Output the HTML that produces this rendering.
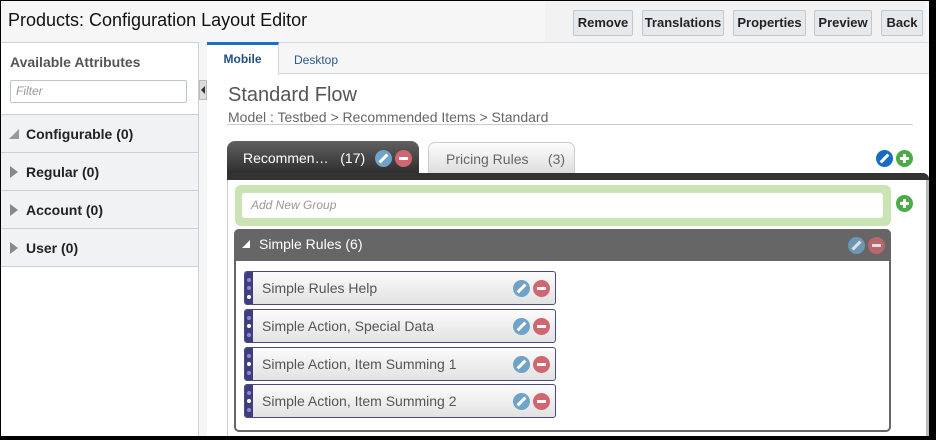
<!DOCTYPE html>
<html><head><meta charset="utf-8"><style>
*{box-sizing:border-box;margin:0;padding:0}
body{width:936px;height:440px;background:#000;font-family:"Liberation Sans",Arial,sans-serif;position:relative;overflow:hidden}
.a{position:absolute}
#page{position:absolute;left:1px;top:1px;width:928px;height:435px;background:#f6f6f6;overflow:hidden}
.btn{position:absolute;top:9px;height:26px;background:#e6e9ec;border:1px solid #bfc8d0;border-radius:2px;font-weight:bold;font-size:13px;color:#222;text-align:center;line-height:24px}
.sec{position:absolute;left:0;width:197px;height:38px;background:#f0f2f4;border-bottom:1px solid #c6d0da;font-weight:bold;font-size:14px;color:#222;line-height:38px;padding-left:25px}
.tri{position:absolute;left:9px;top:13px;width:0;height:0;border-top:6px solid transparent;border-bottom:6px solid transparent;border-left:8px solid #888}
.ic{position:absolute;width:17px;height:17px;border-radius:50%}
.ed{background:#6fa3c7}
.rm{background:#d06670}
.rm::after{content:"";position:absolute;left:4px;top:7px;width:9px;height:3px;background:#fff}
.ed::after{content:"";position:absolute;left:7px;top:3px;width:3px;height:11px;background:#fff;transform:rotate(45deg)}
.gp{background:#4caa48}
.gp::before{content:"";position:absolute;left:4px;top:7px;width:9px;height:3px;background:#fff}
.gp::after{content:"";position:absolute;left:7px;top:4px;width:3px;height:9px;background:#fff}
.item{position:absolute;left:243px;width:312px;height:34px;border:1px solid #4a4a80;border-radius:3px;background:linear-gradient(#fbfbfb,#e2e2e2);font-size:14px;color:#555;line-height:32px;padding-left:17px}
.item .strip{position:absolute;left:0;top:0;width:8px;height:32px;background:#3d3d80;border-radius:2px 0 0 2px}
.item .strip i{position:absolute;left:2px;width:4px;height:4px;border-radius:50%;background:#8a8ad0}
.item .strip i.w{background:#fff}
</style></head><body>
<div id="page">
<div class="a" style="left:7px;top:9px;font-size:18px;color:#111">Products: Configuration Layout Editor</div>
<div class="a" style="left:544px;top:0;width:380px;height:49px;background:#f2f2f2"></div>
<div class="a" style="left:544px;top:43px;width:380px;height:6px;background:#fff"></div>
<div class="btn" style="left:572px;width:60px">Remove</div>
<div class="btn" style="left:641px;width:82px">Translations</div>
<div class="btn" style="left:732px;width:73px">Properties</div>
<div class="btn" style="left:813px;width:58px">Preview</div>
<div class="btn" style="left:880px;width:42px">Back</div>

<div class="a" style="left:0;top:41px;width:198px;height:394px;background:#fff;border-top:1px solid #c8d0d8;border-right:1px solid #c8d0d8"></div>
<div class="a" style="left:9px;top:53px;font-size:14px;font-weight:bold;color:#555">Available Attributes</div>
<div class="a" style="left:9px;top:79px;width:177px;height:23px;border:1px solid #bcc6cf;border-radius:2px;background:#fff;font-size:12px;font-style:italic;color:#999;line-height:21px;padding-left:5px">Filter</div>
<div class="a" style="left:0;top:113px;width:197px;height:1px;background:#c6d0da"></div>
<div class="sec" style="top:114px"><div class="tri" style="border:none;width:0;height:0;border-left:10px solid transparent;border-bottom:10px solid #999;top:14px;left:8px"></div>Configurable (0)</div>
<div class="sec" style="top:152px"><div class="tri"></div>Regular (0)</div>
<div class="sec" style="top:190px"><div class="tri"></div>Account (0)</div>
<div class="sec" style="top:228px"><div class="tri"></div>User (0)</div>
<div class="a" style="left:198px;top:79px;width:8px;height:20px;background:#ddd;border:1px solid #bbb"></div>
<div class="a" style="left:200px;top:85px;width:0;height:0;border-top:4px solid transparent;border-bottom:4px solid transparent;border-right:4px solid #333"></div>

<div class="a" style="left:206px;top:41px;width:722px;height:394px;background:#fff;border-top:1px solid #d4dbe2"></div>
<div class="a" style="left:206px;top:42px;width:722px;height:31px;background:#f6f6f6;border-bottom:1px solid #d0d8e0"></div>
<div class="a" style="left:206px;top:41px;width:72px;height:33px;background:#fff;border-top:3px solid #1a70c8;border-right:1px solid #d0d8e0;font-size:12px;font-weight:bold;color:#1f4f80;text-align:center;line-height:28px">Mobile</div>
<div class="a" style="left:293px;top:52px;font-size:12px;color:#2a5a8a">Desktop</div>
<div class="a" style="left:227px;top:83px;font-size:20px;color:#555">Standard Flow</div>
<div class="a" style="left:227px;top:108px;font-size:14px;color:#666">Model : Testbed &gt; Recommended Items &gt; Standard</div>
<div class="a" style="left:226px;top:123px;width:686px;height:1px;background:#ccc"></div>

<div class="a" style="left:226px;top:140px;width:192px;height:34px;border-radius:8px 8px 0 0;background:linear-gradient(#606060,#2c2c2c);color:#fff;font-size:14px;line-height:34px;padding-left:16px">Recommen…&nbsp;&nbsp;&nbsp;(17)</div>
<div class="ic ed" style="left:374px;top:149px"></div><div class="ic rm" style="left:394px;top:149px"></div>
<div class="a" style="left:427px;top:141px;width:147px;height:33px;border-radius:7px 7px 0 0;border:1px solid #ccc;background:linear-gradient(#fdfdfd,#dcdcdc);color:#666;font-size:14px;line-height:32px;padding-left:17px">Pricing Rules&nbsp;&nbsp;&nbsp;&nbsp;&nbsp;(3)</div>
<div class="ic" style="left:875px;top:149px;background:#1a6cc0"></div><div class="a" style="left:882px;top:152px;width:3px;height:11px;background:#fff;transform:rotate(45deg)"></div>
<div class="ic gp" style="left:895px;top:149px"></div>
<div class="a" style="left:226px;top:172px;width:702px;height:7px;background:#333;border-radius:0 6px 0 0"></div>
<div class="a" style="left:226px;top:179px;width:1px;height:256px;background:#ccc"></div>
<div class="a" style="left:925px;top:179px;width:3px;height:256px;background:#bbb"></div>

<div class="a" style="left:234px;top:184px;width:656px;height:41px;background:#cbe4b3;border-radius:6px"></div>
<div class="a" style="left:241px;top:192px;width:641px;height:25px;background:#fff;border-radius:3px;font-size:12px;font-style:italic;color:#999;line-height:25px;padding-left:9px">Add New Group</div>
<div class="ic gp" style="left:895px;top:194px"></div>

<div class="a" style="left:233px;top:228px;width:657px;height:203px;border:2px solid #666;border-radius:5px;background:#fff"></div>
<div class="a" style="left:233px;top:228px;width:657px;height:32px;background:#666;border-radius:5px 5px 0 0;color:#fff;font-size:14px;line-height:31px;padding-left:25px">Simple Rules (6)</div>
<div class="a" style="left:241px;top:239px;width:0;height:0;border-left:8px solid transparent;border-bottom:8px solid #fff"></div>
<div class="ic ed" style="left:847px;top:236px;opacity:.8"></div><div class="ic rm" style="left:867px;top:236px;opacity:.8"></div>

<div class="item" style="top:270px"><div class="strip"><i style="top:6px"></i><i style="top:14px"></i><i class="w" style="top:23px"></i></div>Simple Rules Help<div class="ic ed" style="left:268px;top:8px"></div><div class="ic rm" style="left:288px;top:8px"></div></div>
<div class="item" style="top:308px"><div class="strip"><i style="top:6px"></i><i class="w" style="top:14px"></i><i style="top:23px"></i></div>Simple Action, Special Data<div class="ic ed" style="left:268px;top:8px"></div><div class="ic rm" style="left:288px;top:8px"></div></div>
<div class="item" style="top:346px"><div class="strip"><i style="top:6px"></i><i class="w" style="top:14px"></i><i style="top:23px"></i></div>Simple Action, Item Summing 1<div class="ic ed" style="left:268px;top:8px"></div><div class="ic rm" style="left:288px;top:8px"></div></div>
<div class="item" style="top:383px"><div class="strip"><i style="top:6px"></i><i class="w" style="top:14px"></i><i style="top:23px"></i></div>Simple Action, Item Summing 2<div class="ic ed" style="left:268px;top:8px"></div><div class="ic rm" style="left:288px;top:8px"></div></div>
</div>
</body></html>
